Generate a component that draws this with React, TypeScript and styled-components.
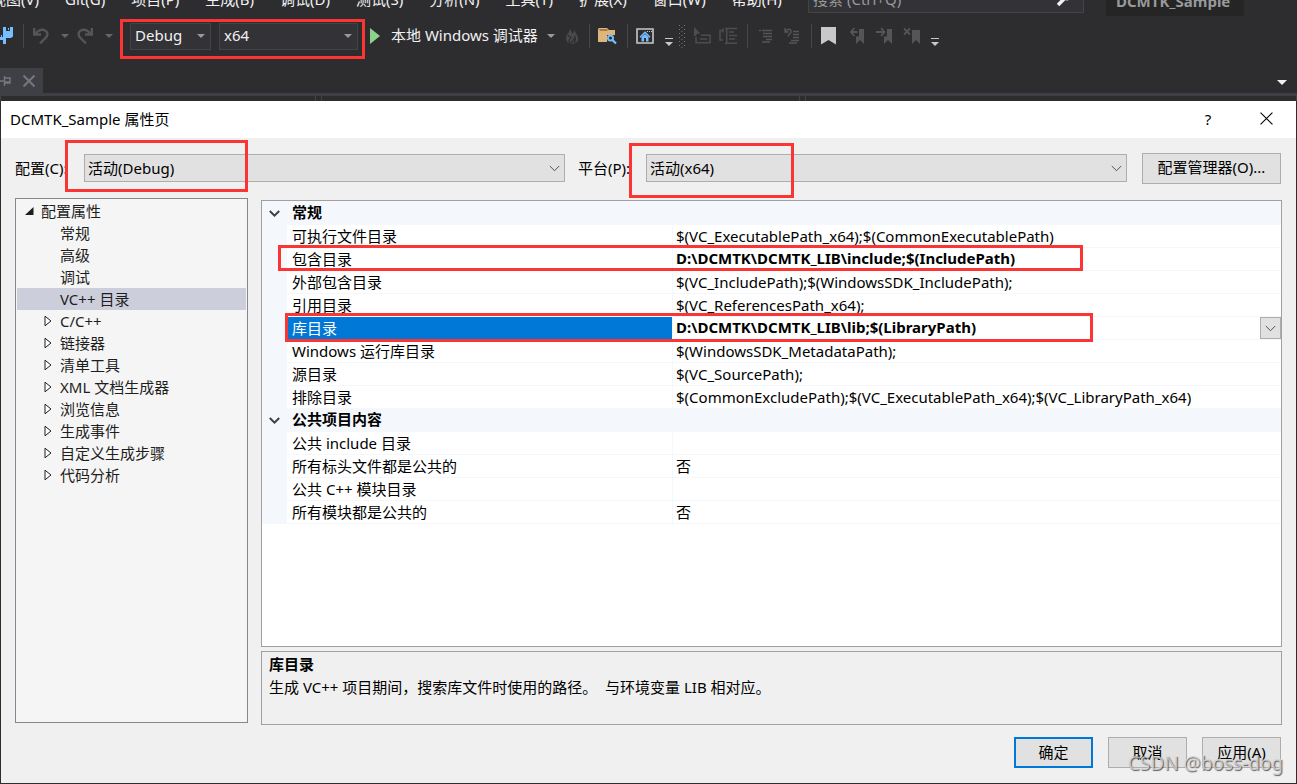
import React from "react";
import styled, { createGlobalStyle, css } from "styled-components";

const Global = createGlobalStyle`
  *, *::before, *::after { box-sizing: border-box; }
  body { margin: 0; background: #2d2d30; }
  body, button, input, select {
    font-family: "Noto Sans", "Noto Sans CJK SC", sans-serif;
    font-size: 15px;
    line-height: 22px;
  }
  button { margin: 0; padding: 0; border: 0; background: none; color: inherit; }
  svg { display: block; flex: none; }
`;

/* ---------- IDE shell ---------- */

const Shell = styled.div`
  display: flex;
  flex-direction: column;
  min-height: 100vh;
  overflow: hidden;
  background: #2d2d30;
  color: #f1f1f1;
`;

const MenuBar = styled.header`
  display: flex;
  align-items: flex-end;
  height: 16px;
`;

const Menu = styled.nav`
  display: flex;
  gap: 26px;
  width: 817px;
  margin-left: -9px;
  padding-bottom: 5px;
  flex: none;
`;

const MenuItem = styled.button`
  white-space: nowrap;
  line-height: 24px;
`;

const SearchBox = styled.label`
  display: flex;
  align-items: center;
  width: 276px;
  height: 28px;
  margin-bottom: 3px;
  padding: 0 10px 0 4px;
  border: 1px solid #434346;
  background: #333337;
  flex: none;
`;

const SearchInput = styled.input`
  flex: 1;
  min-width: 0;
  padding: 0;
  border: 0;
  background: none;
  color: #999;
  &::placeholder { color: #999; opacity: 1; }
`;

const SolutionName = styled.div`
  margin-left: 22px;
  padding: 0 14px 4px 10px;
  background: #252526;
  color: #999;
  font-weight: 700;
  white-space: nowrap;
`;

const Toolbar = styled.div`
  position: relative;
  display: flex;
  align-items: center;
  height: 40px;
`;

const Group = styled.div<{ $lead?: number; $gap?: number }>`
  display: flex;
  align-items: center;
  flex: none;
  gap: ${(p) => p.$gap ?? 8}px;
  margin-left: ${(p) => p.$lead ?? 8}px;
`;

const Separator = styled.span<{ $lead?: number }>`
  flex: none;
  width: 1px;
  height: 24px;
  margin-left: ${(p) => p.$lead ?? 10}px;
  background: #46464a;
`;

const ToolButton = styled.button`
  display: flex;
  align-items: center;
  height: 24px;
  flex: none;
`;

const ComboFrame = styled.div<{ $dark?: boolean; $width?: number }>`
  display: grid;
  align-items: center;
  ${(p) => (p.$width ? css`width: ${p.$width}px;` : css`flex: 1;`)}
  height: ${(p) => (p.$dark ? 27 : 28)}px;
  border: 1px solid ${(p) => (p.$dark ? "#434346" : "#adadad")};
  background: ${(p) => (p.$dark ? "#333337" : "#e1e1e1")};
  > * { grid-area: 1 / 1; }
  > svg { justify-self: end; margin-right: ${(p) => (p.$dark ? 5 : 4)}px; pointer-events: none; }
`;

const ComboSelect = styled.select<{ $dark?: boolean }>`
  appearance: none;
  width: 100%;
  height: 100%;
  padding: ${(p) => (p.$dark ? "0 20px 2px 4px" : "0 20px 0 3px")};
  border: 0;
  background: none;
  color: ${(p) => (p.$dark ? "#f1f1f1" : "#000")};
`;

const RunLabel = styled.span`
  width: 150px;
  margin: 0 6px 0 11px;
  padding-bottom: 2px;
  text-align: left;
  white-space: nowrap;
`;

const TabStrip = styled.div`
  display: flex;
  align-items: flex-end;
  justify-content: space-between;
  height: 40px;
  border-bottom: 3px solid #3f3f46;
`;

const Tab = styled.div`
  display: flex;
  align-items: center;
  gap: 12px;
  width: 43px;
  height: 25px;
  background: #3f3f46;
`;

const TabList = styled.button`
  height: 22px;
  padding: 0 10px;
`;

const EditorBar = styled.div`
  display: flex;
  gap: 5px;
  height: 5px;
  > span { flex: 1; border: 1px solid #434346; border-width: 0 1px; }
  > span:first-child { flex: none; width: 316px; }
  > span:nth-child(2) { flex: none; width: 479px; }
`;

/* ---------- Dialog ---------- */

const Dialog = styled.section`
  position: relative;
  display: flex;
  flex-direction: column;
  flex: 1;
  margin: 0 1px 1px;
  background: #f0f0f0;
  color: #000;
`;

const TitleBar = styled.div`
  display: flex;
  align-items: center;
  height: 37px;
  padding: 0 23px 2px 9px;
  background: #fff;
`;

const Title = styled.h1`
  flex: 1;
  margin: 0;
  font-size: 15px;
  font-weight: 400;
`;

const TitleButton = styled.button`
  display: flex;
  align-items: center;
  justify-content: center;
  width: 14px;
  height: 24px;
  margin-left: 44px;
`;

const ConfigRow = styled.div`
  position: relative;
  display: flex;
  align-items: center;
  height: 60px;
  padding: 0 15px 0 14px;
`;

const ConfigLabel = styled.label<{ $width: number; $lead?: number }>`
  flex: none;
  width: ${(p) => p.$width}px;
  margin-left: ${(p) => p.$lead ?? 0}px;
  white-space: nowrap;
`;

const PushButton = styled.button<{ $width: number; $primary?: boolean }>`
  flex: none;
  width: ${(p) => p.$width}px;
  height: 31px;
  padding-bottom: 2px;
  border: ${(p) => (p.$primary ? "2px solid #0078d7" : "1px solid #adadad")};
  background: #e1e1e1;
  color: #000;
`;

const Content = styled.div`
  display: flex;
  flex: 1;
  gap: 13px;
  padding: 0 14px;
`;

const Tree = styled.ul`
  flex: none;
  width: 233px;
  margin: 0 0 2px;
  padding: 1px;
  border: 1px solid #828790;
  background: #f5f5f5;
  color: #1e1e1e;
  list-style: none;
`;

const TreeRow = styled.li<{ $root?: boolean; $selected?: boolean }>`
  display: flex;
  align-items: center;
  gap: 6px;
  height: 22px;
  padding-left: ${(p) => (p.$root ? 7 : 26)}px;
  background: ${(p) => (p.$selected ? "#cccedb" : "transparent")};
  white-space: nowrap;
`;

const TreeArrow = styled.span`
  display: flex;
  justify-content: center;
  width: 11px;
`;

const Details = styled.div`
  position: relative;
  display: flex;
  flex-direction: column;
  flex: 1;
  gap: 4px;
  min-width: 0;
  padding-top: 2px;
`;

const GridPanel = styled.div`
  flex: 1;
  border: 1px solid #a0a0a0;
  background: #fff;
`;

const Grid = styled.table`
  width: 100%;
  table-layout: fixed;
  border-collapse: separate;
  border-spacing: 0;
  border-top: 1px solid #f4f7fc;
  th, td {
    height: 23px;
    padding: 0 4px;
    line-height: 22px;
    text-align: left;
    font-weight: 400;
    white-space: nowrap;
  }
`;

const Gutter = styled.td`
  background: #f4f7fc;
  && { padding: 0 7px; }
`;

const CategoryCell = styled.th`
  background: #f4f7fc;
  && { font-weight: 700; padding: 0 5px 2px; line-height: 21px; }
`;

const NameCell = styled.th<{ $selected?: boolean }>`
  border-bottom: 1px solid #f4f7fc;
  border-right: 1px solid #f4f7fc;
  background: ${(p) => (p.$selected ? "#0078d7" : "#fff")};
  color: ${(p) => (p.$selected ? "#fff" : "#000")};
  && { padding-left: 5px; }
`;

const ValueCell = styled.td<{ $bold?: boolean; $action?: boolean }>`
  border-bottom: 1px solid #f4f7fc;
  && {
    font-weight: ${(p) => (p.$bold ? 700 : 400)};
    padding: 0 ${(p) => (p.$action ? 0 : 4)}px ${(p) => (p.$bold && !p.$action ? 2 : 0)}px 3px;
    line-height: ${(p) => (p.$bold ? 20 : 22)}px;
  }
`;

const ValueLine = styled.div`
  display: flex;
  justify-content: space-between;
`;

const DropButton = styled.button`
  display: flex;
  align-items: center;
  justify-content: center;
  width: 21px;
  height: 22px;
  border: 1px solid #adadad;
  background: #e1e1e1;
`;

const Description = styled.div`
  height: 74px;
  padding: 1px 7px;
  border: 1px solid #a0a0a0;
  line-height: 23px;
  white-space: pre-wrap;
`;

const DescriptionTitle = styled.h2`
  margin: 0;
  font-size: 15px;
  line-height: 23px;
`;

const Footer = styled.footer`
  display: flex;
  justify-content: flex-end;
  gap: 15px;
  padding: 12px 15px 15px;
`;

const Highlight = styled.span<{ $x: number; $y: number; $w: number; $h: number }>`
  position: absolute;
  left: ${(p) => p.$x}px;
  top: ${(p) => p.$y}px;
  width: ${(p) => p.$w}px;
  height: ${(p) => p.$h}px;
  border: 3px solid #fa3534;
  pointer-events: none;
`;

const Watermark = styled.span`
  position: absolute;
  right: 13px;
  bottom: 6px;
  font-size: 19px;
  line-height: 28px;
  color: rgba(215, 215, 215, 0.8);
  text-shadow: 1px 1px 1px rgba(70, 70, 70, 0.85);
  pointer-events: none;
`;

/* ---------- Icons ---------- */

const Caret = ({ fill = "#999", w = 8 }: { fill?: string; w?: number }) => (
  <svg width={w} height={w / 2} viewBox="0 0 8 4"><path d="M0 0h8L4 4z" fill={fill} /></svg>
);

const Chevron = ({ bold }: { bold?: boolean }) => (
  <svg width="11" height="11" viewBox="0 0 11 11" fill="none" stroke={bold ? "#404040" : "#505050"} strokeWidth={bold ? 2 : 1}>
    <path d="M.8 3l4.7 4.7L10.200 3" />
  </svg>
);

const Overflow = () => (
  <svg width="8" height="24" viewBox="0 0 8 24"><path d="M0 14h8v1H0zM0 18h8l-4 4z" fill="#c8c8c8" /></svg>
);

const SaveAllIcon = () => (
  <svg width="14" height="20" viewBox="0 0 14 20">
    <path d="M3 1h10v9.500L11 12H3zM-6 8H6v10H-6z" fill="#75beff" />
    <path d="M6 1h4v4H6zM0 8h3v3H0zM-1 14h4v4h-4z" fill="#2d2d30" />
    <path d="M8 2h1v2H8zM1 9h1v2H1z" fill="#75beff" />
  </svg>
);

const UndoIcon = ({ flip }: { flip?: boolean }) => (
  <svg width="16" height="18" viewBox="0 0 16 18" fill="none" stroke="#555558" strokeWidth="2.400">
    <g transform={flip ? "matrix(-1 0 0 1 16 0)" : undefined}>
      <path d="M1.200 1v6.500H8M2 7C5 3.500 8 2 11 3c4 1.500 4.500 5 1.500 8L7 16.500" />
    </g>
  </svg>
);

const PlayIcon = () => (
  <svg width="10" height="16" viewBox="0 0 10 16"><path d="M0 0l10 8-10 8z" fill="#8dd28a" /></svg>
);

const FlameIcon = () => (
  <svg width="14" height="16" viewBox="0 0 14 16">
    <path d="M5 0c1 3 2 4 2 6 1-1 2-2 2-4 2 3 3 5 4 7 1 4-2 7-6 7s-6-3-6-6C1 6 5 5 5 0z" fill="#4a4a4d" />
    <path d="M6 8c0 3-2 3-2 5 0 1 1 2 2 2 2-1 3-4 4-6 1 4 0 5-1 6M3 7l1 2" fill="none" stroke="#2d2d30" strokeWidth="1.200" />
  </svg>
);

const FolderFindIcon = () => (
  <svg width="19" height="18" viewBox="0 0 19 18">
    <path d="M1 1h8l2 2h6v12H0V2z" fill="#dcb67a" />
    <path d="M1 2h8l1 2H2z" fill="#a67d43" />
    <path d="M9 8h8v7H9z" fill="#2d2d30" />
    <circle cx="12.500" cy="11" r="2.500" fill="none" stroke="#75beff" strokeWidth="2" />
    <path d="M14.500 13l3.500 3.500" stroke="#75beff" strokeWidth="2.200" />
  </svg>
);

const HomeWindowIcon = () => (
  <svg width="18" height="16" viewBox="0 0 18 16">
    <path d="M1 1h16v14H1z" fill="none" stroke="#c8c8c8" strokeWidth="1.600" />
    <path d="M11 3h1v1h-1zM13 3h1v1h-1zM15 3h1v1h-1z" fill="#c8c8c8" />
    <path d="M4 9.200L9 4.200l5 5" fill="none" stroke="#75beff" strokeWidth="1.500" />
    <path d="M5.500 9L9 6l3.500 3v4.500H10V10H8v3.500H5.500z" fill="#75beff" />
  </svg>
);

const GripIcon = () => (
  <svg width="7" height="24" viewBox="0 0 7 24">
    {[1, 5, 9, 13, 17, 21].map((y) => (
      <path key={y} d={`M0 ${y}h1v1H0zM5 ${y}h1v1H5zM2.500 ${y + 2}h1v1h-1z`} fill="#77777a" />
    ))}
  </svg>
);

const SelectElementIcon = () => (
  <svg width="17" height="18" viewBox="0 0 17 18" fill="none" stroke="#4d4d50" strokeWidth="1.500">
    <path d="M0 0l6.500 6.500H3.500L1.500 9H0z" fill="#4d4d50" stroke="none" />
    <path d="M7 8.200h9v7.500H2V10M6 12h7" />
  </svg>
);

const OutlineIcon = () => (
  <svg width="18" height="18" viewBox="0 0 18 18" fill="none" stroke="#4d4d50" strokeWidth="1.500">
    <path d="M4 13H1V3.500h4M4 1.500v4M7.700 1v16M6 1.500h12M10 5h5M10 8.500h8M10 12h6M6 16.300h12" />
  </svg>
);

const IndentIcon = () => (
  <svg width="13" height="14" viewBox="0 0 13 14" stroke="#555558" strokeWidth="1.300">
    <path d="M0 1.500h2M3 1.500h10M4 4.500h9M4 7.500h9M7 10.500h6M3 13h8" />
  </svg>
);

const UnindentIcon = () => (
  <svg width="16" height="16" viewBox="0 0 16 16" fill="none" stroke="#555558" strokeWidth="1.400">
    <path d="M1 0v4h3.500M1.500 3.500C3 .5 7 .5 7 3.500c0 2-2 2.500-3 5M9 3.500h6M9 6.500h6M9 9.500h6M7 12.500h8M5 15h8" />
  </svg>
);

const BookmarkIcon = () => (
  <svg width="15" height="18" viewBox="0 0 15 18"><path d="M0 0h15v17.500L7.500 13 0 17.500z" fill="#c8c8c8" /></svg>
);

const SmallBookmark = ({ kind }: { kind: "prev" | "next" | "clear" }) => (
  <svg width="17" height="18" viewBox="0 0 17 18" fill="none" stroke="#555558" strokeWidth="1.800">
    <path d={kind === "clear" ? "M9 3h8v14l-4-4-4 4z" : "M12 2h5v15l-4-4-4 4V9.500h3z"} fill="#555558" stroke="none" />
    {kind === "prev" && <path d="M4 5h6.500M7.500 1L4 5l3.500 4" />}
    {kind === "next" && <path d="M1 5h8M6 1l3.500 4L6 9" />}
    {kind === "clear" && <path d="M1 1.500l6 6M7 1.500l-6 6" />}
  </svg>
);

const PinIcon = () => (
  <svg width="11" height="10" viewBox="0 0 11 10" fill="none" stroke="#77777b" strokeWidth="1.400">
    <path d="M0 5h4M4.500 0v10M4.500 2h5.500v5H4.500M5 6h5" />
  </svg>
);

const CrossIcon = ({ size = 12, color = "#77777b", weight = 2 }: { size?: number; color?: string; weight?: number }) => (
  <svg width={size} height={size} viewBox="0 0 12 12" stroke={color} strokeWidth={weight}>
    <path d="M.5.5l11 11M11.500.5l-11 11" />
  </svg>
);

const WrenchIcon = () => (
  <svg width="16" height="22" viewBox="0 0 16 22"><path d="M1 17l7-7" stroke="#f1f1f1" strokeWidth="3.500" /><circle cx="10" cy="8" r="4.500" fill="#f1f1f1" /></svg>
);

const RootArrow = () => (
  <svg width="9" height="8" viewBox="0 0 9 8"><path d="M8.500 0v8H0z" fill="#1e1e1e" /></svg>
);

const ClosedArrow = () => (
  <svg width="9" height="12" viewBox="0 0 9 12"><path d="M1 1.200v9.600L7 6z" fill="#fff" stroke="#1e1e1e" /></svg>
);

/* ---------- Data ---------- */

const menuItems = ["视图(V)", "Git(G)", "项目(P)", "生成(B)", "调试(D)", "测试(S)", "分析(N)", "工具(T)", "扩展(X)", "窗口(W)", "帮助(H)"];

const leaves = ["常规", "高级", "调试", "VC++ 目录"];
const branches = ["C/C++", "链接器", "清单工具", "XML 文档生成器", "浏览信息", "生成事件", "自定义生成步骤", "代码分析"];

type Property = { name: string; value: string; bold?: boolean; selected?: boolean };

const categories: { title: string; rows: Property[] }[] = [
  {
    title: "常规",
    rows: [
      { name: "可执行文件目录", value: "$(VC_ExecutablePath_x64);$(CommonExecutablePath)" },
      { name: "包含目录", value: "D:\\DCMTK\\DCMTK_LIB\\include;$(IncludePath)", bold: true },
      { name: "外部包含目录", value: "$(VC_IncludePath);$(WindowsSDK_IncludePath);" },
      { name: "引用目录", value: "$(VC_ReferencesPath_x64);" },
      { name: "库目录", value: "D:\\DCMTK\\DCMTK_LIB\\lib;$(LibraryPath)", bold: true, selected: true },
      { name: "Windows 运行库目录", value: "$(WindowsSDK_MetadataPath);" },
      { name: "源目录", value: "$(VC_SourcePath);" },
      { name: "排除目录", value: "$(CommonExcludePath);$(VC_ExecutablePath_x64);$(VC_LibraryPath_x64)" },
    ],
  },
  {
    title: "公共项目内容",
    rows: [
      { name: "公共 include 目录", value: "" },
      { name: "所有标头文件都是公共的", value: "否" },
      { name: "公共 C++ 模块目录", value: "" },
      { name: "所有模块都是公共的", value: "否" },
    ],
  },
];

/* ---------- Parts ---------- */

const Combo = ({ id, value, label, dark, width }: { id: string; value: string; label?: string; dark?: boolean; width?: number }) => (
  <ComboFrame $dark={dark} $width={width}>
    <ComboSelect id={id} aria-label={label} $dark={dark} defaultValue={value}>
      <option>{value}</option>
    </ComboSelect>
    {dark ? <Caret /> : <Chevron />}
  </ComboFrame>
);

const PropertyRow = ({ name, value, bold, selected }: Property) => (
  <tr>
    <Gutter />
    <NameCell scope="row" $selected={selected}>{name}</NameCell>
    <ValueCell $bold={bold} $action={selected}>
      {selected ? (
        <ValueLine>
          {value}
          <DropButton aria-label="编辑"><Chevron /></DropButton>
        </ValueLine>
      ) : value}
    </ValueCell>
  </tr>
);

export default function App() {
  return (
    <Shell>
      <Global />
      <MenuBar>
        <Menu>{menuItems.map((m) => <MenuItem key={m}>{m}</MenuItem>)}</Menu>
        <SearchBox>
          <SearchInput aria-label="搜索" placeholder="搜索 (Ctrl+Q)" />
          <WrenchIcon />
        </SearchBox>
        <SolutionName>DCMTK_Sample</SolutionName>
      </MenuBar>

      <Toolbar>
        <ToolButton aria-label="全部保存"><SaveAllIcon /></ToolButton>
        <Separator $lead={9} />
        <Group>
          <Group $lead={1} $gap={12}>
            <ToolButton aria-label="撤消"><UndoIcon /></ToolButton>
            <ToolButton aria-label="撤消列表"><Caret fill="#656568" /></ToolButton>
          </Group>
          <Group $lead={0} $gap={12}>
            <ToolButton aria-label="重做"><UndoIcon flip /></ToolButton>
            <ToolButton aria-label="重做列表"><Caret fill="#656568" /></ToolButton>
          </Group>
        </Group>
        <Group $lead={17}>
          <Combo id="solution-config" label="解决方案配置" value="Debug" dark width={81} />
          <Combo id="solution-platform" label="解决方案平台" value="x64" dark width={139} />
        </Group>
        <Group $lead={12} $gap={10}>
          <ToolButton>
            <PlayIcon />
            <RunLabel>本地 Windows 调试器</RunLabel>
            <Caret />
          </ToolButton>
          <ToolButton aria-label="热重载"><FlameIcon /></ToolButton>
        </Group>
        <Separator />
        <Group><ToolButton aria-label="在文件中查找"><FolderFindIcon /></ToolButton></Group>
        <Separator />
        <Group $gap={11}>
          <ToolButton aria-label="主页"><HomeWindowIcon /></ToolButton>
          <ToolButton aria-label="工具栏选项"><Overflow /></ToolButton>
        </Group>
        <Group $lead={6}>
          <GripIcon />
          <ToolButton aria-label="选择元素"><SelectElementIcon /></ToolButton>
          <ToolButton aria-label="大纲"><OutlineIcon /></ToolButton>
        </Group>
        <Separator />
        <Group $lead={11} $gap={12}>
          <ToolButton aria-label="增加缩进"><IndentIcon /></ToolButton>
          <ToolButton aria-label="减少缩进"><UnindentIcon /></ToolButton>
        </Group>
        <Separator $lead={11} />
        <Group $lead={9} $gap={11}>
          <ToolButton aria-label="书签"><BookmarkIcon /></ToolButton>
          <ToolButton aria-label="上一书签"><SmallBookmark kind="prev" /></ToolButton>
          <ToolButton aria-label="下一书签"><SmallBookmark kind="next" /></ToolButton>
          <ToolButton aria-label="清除书签"><SmallBookmark kind="clear" /></ToolButton>
          <ToolButton aria-label="更多选项"><Overflow /></ToolButton>
        </Group>
        <Highlight $x={120} $y={3} $w={245} $h={40} />
      </Toolbar>

      <TabStrip>
        <Tab>
          <PinIcon />
          <ToolButton aria-label="关闭选项卡"><CrossIcon /></ToolButton>
        </Tab>
        <TabList aria-label="选项卡列表"><Caret fill="#f1f1f1" w={10} /></TabList>
      </TabStrip>
      <EditorBar><span /><span /><span /></EditorBar>

      <Dialog>
        <TitleBar>
          <Title>DCMTK_Sample 属性页</Title>
          <TitleButton aria-label="帮助">?</TitleButton>
          <TitleButton aria-label="关闭"><CrossIcon size={13} color="#000" weight={1} /></TitleButton>
        </TitleBar>

        <ConfigRow>
          <ConfigLabel htmlFor="config" $width={69}>配置(C):</ConfigLabel>
          <Combo id="config" value="活动(Debug)" />
          <ConfigLabel htmlFor="platform" $width={68} $lead={13}>平台(P):</ConfigLabel>
          <Combo id="platform" value="活动(x64)" />
          <Group $lead={15}><PushButton $width={139}>配置管理器(O)...</PushButton></Group>
          <Highlight $x={64} $y={2} $w={183} $h={52} />
          <Highlight $x={628} $y={5} $w={165} $h={55} />
        </ConfigRow>

        <Content>
          <Tree>
            <TreeRow $root><TreeArrow><RootArrow /></TreeArrow>配置属性</TreeRow>
            {leaves.map((name) => (
              <TreeRow key={name} $selected={name === "VC++ 目录"}><TreeArrow />{name}</TreeRow>
            ))}
            {branches.map((name) => (
              <TreeRow key={name}><TreeArrow><ClosedArrow /></TreeArrow>{name}</TreeRow>
            ))}
          </Tree>

          <Details>
            <GridPanel>
              <Grid>
                <colgroup>
                  <col style={{ width: 25 }} />
                  <col style={{ width: 386 }} />
                  <col />
                </colgroup>
                {categories.map((c) => (
                  <tbody key={c.title}>
                    <tr>
                      <Gutter><Chevron bold /></Gutter>
                      <CategoryCell colSpan={2}>{c.title}</CategoryCell>
                    </tr>
                    {c.rows.map((r) => <PropertyRow key={r.name} {...r} />)}
                  </tbody>
                ))}
              </Grid>
            </GridPanel>
            <Description>
              <DescriptionTitle>库目录</DescriptionTitle>
              {"生成 VC++ 项目期间，搜索库文件时使用的路径。  与环境变量 LIB 相对应。"}
            </Description>
            <Highlight $x={17} $y={47} $w={805} $h={26} />
            <Highlight $x={24} $y={115} $w={808} $h={29} />
          </Details>
        </Content>

        <Footer>
          <PushButton $width={79} $primary>确定</PushButton>
          <PushButton $width={79}>取消</PushButton>
          <PushButton $width={79}>应用(A)</PushButton>
        </Footer>
        <Watermark>CSDN @boss-dog</Watermark>
      </Dialog>
    </Shell>
  );
}
